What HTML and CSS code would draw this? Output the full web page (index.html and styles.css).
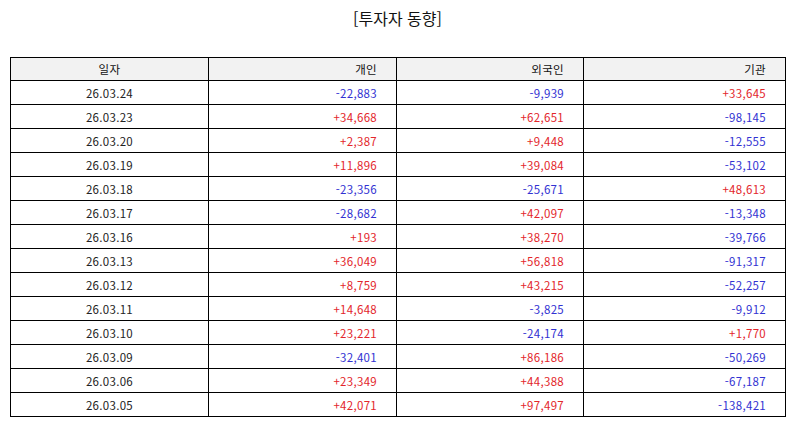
FILE: index.html
```html
<!DOCTYPE html>
<html lang="ko">
<head>
<meta charset="utf-8">
<link rel="stylesheet" href="styles.css">
</head>
<body>
<div class="page">
  <h1 class="title">[투자자 동향]</h1>
  <table class="grid">
    <colgroup>
      <col class="c-date"><col class="c-ind"><col class="c-for"><col class="c-ins">
    </colgroup>
    <thead>
      <tr><th class="center">일자</th><th>개인</th><th>외국인</th><th>기관</th></tr>
    </thead>
    <tbody>
      <tr><td class="center">26.03.24</td><td class="neg">-22,883</td><td class="neg">-9,939</td><td class="pos">+33,645</td></tr>
      <tr><td class="center">26.03.23</td><td class="pos">+34,668</td><td class="pos">+62,651</td><td class="neg">-98,145</td></tr>
      <tr><td class="center">26.03.20</td><td class="pos">+2,387</td><td class="pos">+9,448</td><td class="neg">-12,555</td></tr>
      <tr><td class="center">26.03.19</td><td class="pos">+11,896</td><td class="pos">+39,084</td><td class="neg">-53,102</td></tr>
      <tr><td class="center">26.03.18</td><td class="neg">-23,356</td><td class="neg">-25,671</td><td class="pos">+48,613</td></tr>
      <tr><td class="center">26.03.17</td><td class="neg">-28,682</td><td class="pos">+42,097</td><td class="neg">-13,348</td></tr>
      <tr><td class="center">26.03.16</td><td class="pos">+193</td><td class="pos">+38,270</td><td class="neg">-39,766</td></tr>
      <tr><td class="center">26.03.13</td><td class="pos">+36,049</td><td class="pos">+56,818</td><td class="neg">-91,317</td></tr>
      <tr><td class="center">26.03.12</td><td class="pos">+8,759</td><td class="pos">+43,215</td><td class="neg">-52,257</td></tr>
      <tr><td class="center">26.03.11</td><td class="pos">+14,648</td><td class="neg">-3,825</td><td class="neg">-9,912</td></tr>
      <tr><td class="center">26.03.10</td><td class="pos">+23,221</td><td class="neg">-24,174</td><td class="pos">+1,770</td></tr>
      <tr><td class="center">26.03.09</td><td class="neg">-32,401</td><td class="pos">+86,186</td><td class="neg">-50,269</td></tr>
      <tr><td class="center">26.03.06</td><td class="pos">+23,349</td><td class="pos">+44,388</td><td class="neg">-67,187</td></tr>
      <tr><td class="center">26.03.05</td><td class="pos">+42,071</td><td class="pos">+97,497</td><td class="neg">-138,421</td></tr>
    </tbody>
  </table>
</div>
</body>
</html>
```
FILE: styles.css
```css
html, body {
  margin: 0;
  padding: 0;
  background: #ffffff;
}
body {
  font-family: "Noto Sans CJK KR", "Noto Sans", sans-serif;
  color: #222222;
}
.page {
  width: 794px;
  height: 425px;
  padding: 0 9px 0 10px;
  box-sizing: border-box;
}
.title {
  margin: 0;
  padding-top: 6px;
  height: 57px;
  box-sizing: border-box;
  font-size: 16px;
  font-weight: normal;
  line-height: 24px;
  text-align: center;
  color: #111111;
}
.grid {
  width: 775px;
  border-collapse: collapse;
  table-layout: fixed;
  font-size: 11.5px;
  letter-spacing: 0.3px;
}
.c-date { width: 198px; }
.c-ind { width: 188px; }
.c-for { width: 187px; }
.c-ins { width: 202px; }
.grid th, .grid td {
  border: 1px solid #000000;
  height: 23px;
  padding: 0 19px 0 0;
  text-align: right;
  line-height: 14px;
  font-weight: normal;
  box-sizing: border-box;
}
.grid th {
  height: 23px;
  background: #f2f2f2;
  color: #111111;
}
.grid td {
  height: 24px;
}
.grid .center {
  text-align: center;
  padding: 0;
}
.pos { color: #e3262b; }
.neg { color: #3232d2; }
```
